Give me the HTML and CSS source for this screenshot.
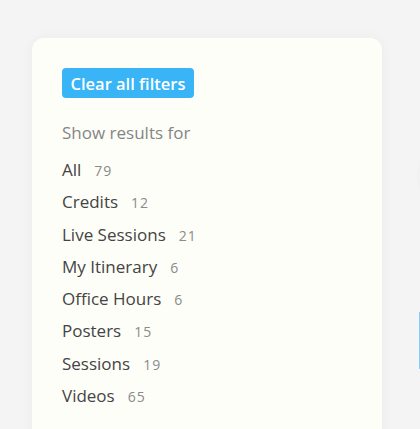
FILE: index.html
```html
<!DOCTYPE html>
<html lang="en">
<head>
    <meta charset="UTF-8">
    <meta name="viewport" content="width=device-width, initial-scale=1.0">
    <title>Filters</title>
    <link rel="stylesheet" href="styles.css">
</head>
<body>
    <div class="page">
        <aside class="filters">
            <button type="button" class="clear-btn">Clear all filters</button>

            <p class="filters-title">Show results for</p>

            <ul class="filter-list">
                <li><span class="name">All</span><span class="count">79</span></li>
                <li><span class="name">Credits</span><span class="count">12</span></li>
                <li><span class="name">Live Sessions</span><span class="count">21</span></li>
                <li><span class="name">My Itinerary</span><span class="count">6</span></li>
                <li><span class="name">Office Hours</span><span class="count">6</span></li>
                <li><span class="name">Posters</span><span class="count">15</span></li>
                <li><span class="name">Sessions</span><span class="count">19</span></li>
                <li><span class="name">Videos</span><span class="count">65</span></li>
            </ul>
        </aside>

        <div class="content">
            <div class="bubble"></div>
            <div class="accent"></div>
        </div>
    </div>
</body>
</html>
```

FILE: styles.css
```css
body {
    margin: 0;
    height: 100vh;
    background-color: #f4f4f4;
    font-family: 'Open Sans', sans-serif;
    color: #444444;
    overflow: hidden;
}

.page {
    display: flex;
    align-items: flex-start;
    gap: 30px;
    padding: 38px 0 0 32px;
}

.filters {
    flex: 0 0 350px;
    box-sizing: border-box;
    padding: 30px 30px 40px;
    background-color: #fefef9;
    border-radius: 12px;
    box-shadow: 0 0 14px rgba(0, 0, 0, 0.04);
    height: 420px;
}

.clear-btn {
    display: block;
    height: 30px;
    padding: 0 8.5px;
    border: none;
    border-radius: 4px;
    background-color: #38b4f7;
    color: #ffffff;
    font-family: inherit;
    font-size: 16.5px;
    font-weight: 600;
    cursor: pointer;
}

.filters-title {
    margin: 24px 0 10px;
    font-size: 17px;
    line-height: 22px;
    color: #858585;
}

.filter-list {
    list-style: none;
    margin: 0;
    padding: 0;
}

.filter-list li {
    display: flex;
    align-items: baseline;
    gap: 13px;
    height: 32.3px;
    line-height: 32px;
    font-size: 17px;
    color: #444444;
}

.filter-list .count {
    font-size: 14px;
    letter-spacing: 1px;
    color: #8a8a8a;
}

.content {
    position: relative;
    flex: 1;
    height: 391px;
}

.bubble {
    position: absolute;
    top: 120px;
    left: 7px;
    width: 40px;
    height: 36px;
    border-radius: 20px;
    background-color: #f4f4f4;
    box-shadow: 0 0 6px rgba(0, 0, 0, 0.04);
}

.accent {
    position: absolute;
    top: 274px;
    left: 7px;
    width: 2px;
    height: 57px;
    background-color: #7fcdf8;
}
```
